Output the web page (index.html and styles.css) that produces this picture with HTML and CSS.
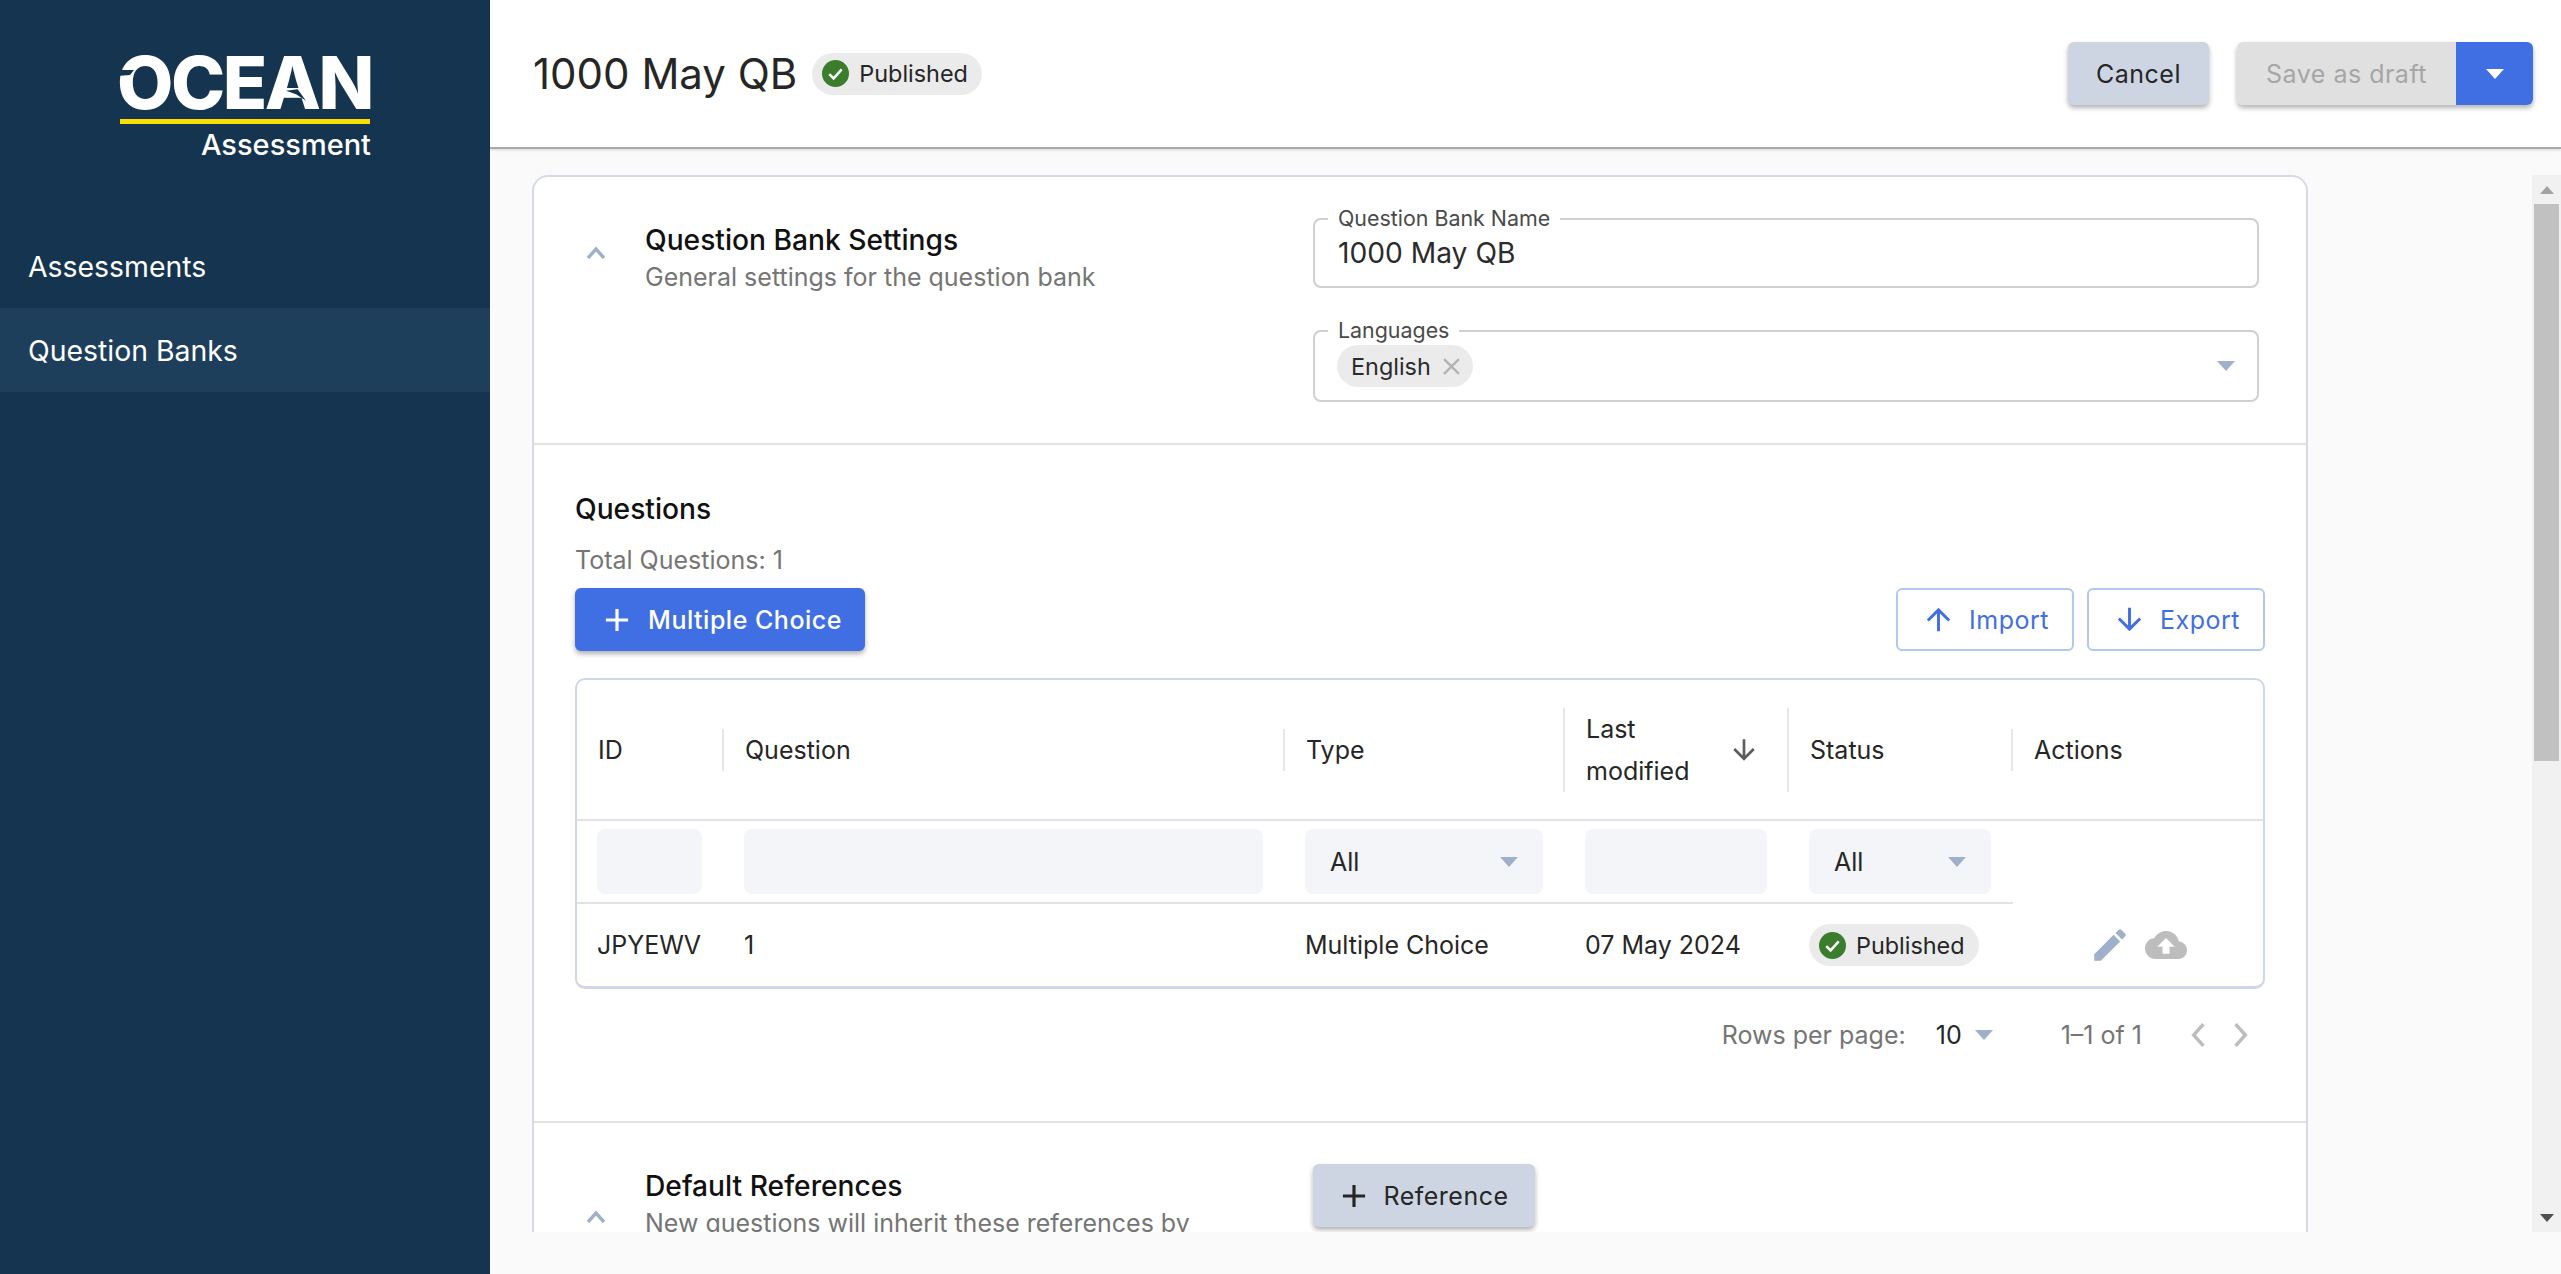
FILE: index.html
```
<!DOCTYPE html>
<html lang="en">
  <head>
    <meta charset="UTF-8" />
    <meta name="viewport" content="width=device-width, initial-scale=1.0" />
    <title>1000 May QB</title>
    <link rel="stylesheet" href="styles.css">
  </head>
  <body>
    <nav class="sidebar">
      <div class="logo">
        <div class="logo-name">
          OCEAN
          <svg class="logo-notch-o" viewBox="0 0 17 6"><path d="M0 0 L17 0 L13 5 L0 6 Z" /></svg>
          <svg class="logo-notch-a" viewBox="0 0 24 14"><path d="M0 2 L14 0 L24 14 L12 6 Z" /></svg>
        </div>
        <div class="logo-bar"></div>
        <div class="logo-sub">Assessment</div>
      </div>
      <ul class="menu">
        <li>Assessments</li>
        <li class="active">Question Banks</li>
      </ul>
    </nav>

    <main class="main">
      <header class="topbar">
        <div class="topbar-title">
          <h1>1000 May QB</h1>
          <span class="badge">
            <svg viewBox="0 0 26 26"><circle cx="13" cy="13" r="13" fill="#3a7d2c" /><path d="M7 13.5l4.2 4.2L19 9" fill="none" stroke="#fff" stroke-width="2.4" /></svg>
            Published
          </span>
        </div>
        <div class="topbar-actions">
          <button class="btn btn-soft">Cancel</button>
          <div class="split">
            <button class="btn split-main">Save as draft</button>
            <button class="btn split-drop"><span class="caret caret-white"></span></button>
          </div>
        </div>
      </header>

      <div class="body">
        <div class="viewport">
          <div class="card">
            <section class="section settings">
              <div class="section-head">
                <svg class="chevron" viewBox="0 0 20 13"><path d="M2 12l8-9 8 9" fill="none" stroke="#9fb0ca" stroke-width="3.4" /></svg>
                <div>
                  <h2>Question Bank Settings</h2>
                  <p>General settings for the question bank</p>
                </div>
              </div>
              <div class="fields">
                <div class="field">
                  <label>Question Bank Name</label>
                  <span class="field-value">1000 May QB</span>
                </div>
                <div class="field field-lang">
                  <label>Languages</label>
                  <span class="chip">English
                    <svg viewBox="0 0 16 16"><path d="M1 1l14 14M15 1L1 15" stroke="#b3b3b3" stroke-width="2.2" /></svg>
                  </span>
                  <span class="caret"></span>
                </div>
              </div>
            </section>

            <section class="section-questions">
              <h2>Questions</h2>
              <p class="total">Total Questions: 1</p>
              <div class="toolbar">
                <button class="btn btn-primary">
                  <svg viewBox="0 0 24 24"><path d="M19 13h-6v6h-2v-6H5v-2h6V5h2v6h6v2z" /></svg>
                  Multiple Choice
                </button>
                <div class="toolbar-right">
                  <button class="btn btn-outline">
                    <svg viewBox="0 0 24 24"><path d="M4 12l1.41 1.41L11 7.83V20h2V7.83l5.58 5.59L20 12l-8-8-8 8z" /></svg>
                    Import
                  </button>
                  <button class="btn btn-outline">
                    <svg viewBox="0 0 24 24"><path d="M20 12l-1.41-1.41L13 16.17V4h-2v12.17l-5.58-5.59L4 12l8 8 8-8z" /></svg>
                    Export
                  </button>
                </div>
              </div>

              <div class="table-wrap">
                <table class="grid">
                  <colgroup>
                    <col class="col-id" />
                    <col class="col-question" />
                    <col class="col-type" />
                    <col class="col-date" />
                    <col class="col-status" />
                    <col />
                  </colgroup>
                  <thead>
                    <tr class="head-row">
                      <th><div class="th-inner">ID</div></th>
                      <th><div class="th-inner">Question</div></th>
                      <th><div class="th-inner th-tall">Type</div></th>
                      <th>
                        <div class="th-inner th-sort">
                          <span>Last modified</span>
                          <svg viewBox="0 0 24 24"><path d="M20 12l-1.41-1.41L13 16.17V4h-2v12.17l-5.58-5.59L4 12l8 8 8-8z" /></svg>
                        </div>
                      </th>
                      <th><div class="th-inner">Status</div></th>
                      <th><div class="th-inner th-last">Actions</div></th>
                    </tr>
                    <tr class="filter-row">
                      <td><div class="filter"></div></td>
                      <td><div class="filter"></div></td>
                      <td><div class="filter">All<span class="caret"></span></div></td>
                      <td><div class="filter"></div></td>
                      <td><div class="filter">All<span class="caret"></span></div></td>
                      <td class="filter-empty"></td>
                    </tr>
                  </thead>
                  <tbody>
                    <tr class="data-row">
                      <td>JPYEWV</td>
                      <td>1</td>
                      <td>Multiple Choice</td>
                      <td>07 May 2024</td>
                      <td>
                        <span class="badge">
                          <svg viewBox="0 0 26 26"><circle cx="13" cy="13" r="13" fill="#3a7d2c" /><path d="M7 13.5l4.2 4.2L19 9" fill="none" stroke="#fff" stroke-width="2.4" /></svg>
                          Published
                        </span>
                      </td>
                      <td>
                        <div class="row-actions">
                          <svg class="icon-edit" viewBox="0 0 24 24"><path d="M3 17.25V21h3.75L17.81 9.94l-3.75-3.75L3 17.25zM20.71 7.04c.39-.39.39-1.02 0-1.41l-2.34-2.34c-.39-.39-1.02-.39-1.41 0l-1.83 1.83 3.75 3.75 1.83-1.83z" /></svg>
                          <svg class="icon-cloud" viewBox="0 0 24 24"><path d="M19.35 10.04C18.67 6.59 15.64 4 12 4 9.11 4 6.6 5.64 5.35 8.04 2.34 8.36 0 10.91 0 14c0 3.31 2.69 6 6 6h13c2.76 0 5-2.24 5-5 0-2.64-2.05-4.78-4.65-4.96zM14 13v4h-4v-4H7l5-5 5 5h-3z" /></svg>
                        </div>
                      </td>
                    </tr>
                  </tbody>
                </table>
              </div>

              <div class="pagination">
                <span class="rows-label">Rows per page:</span>
                <span class="rows-value">10<span class="caret"></span></span>
                <span class="range">1–1 of 1</span>
                <svg class="page-arrow" viewBox="0 0 14 24"><path d="M12 2L3 12l9 10" fill="none" stroke="#bdbdbd" stroke-width="3.2" /></svg>
                <svg class="page-arrow" viewBox="0 0 14 24"><path d="M2 2l9 10-9 10" fill="none" stroke="#bdbdbd" stroke-width="3.2" /></svg>
              </div>
            </section>

            <section class="section references">
              <div class="section-head">
                <svg class="chevron" viewBox="0 0 20 13"><path d="M2 12l8-9 8 9" fill="none" stroke="#9fb0ca" stroke-width="3.4" /></svg>
                <div>
                  <h2>Default References</h2>
                  <p>New questions will inherit these references by default</p>
                </div>
              </div>
              <div class="fields">
                <button class="btn btn-soft btn-ref">
                  <svg viewBox="0 0 24 24"><path d="M19 13h-6v6h-2v-6H5v-2h6V5h2v6h6v2z" /></svg>
                  Reference
                </button>
              </div>
            </section>
          </div>
        </div>

        <div class="scrollbar">
          <div class="scroll-btn"><span class="scroll-up"></span></div>
          <div class="scroll-track"><div class="scroll-thumb"></div></div>
          <div class="scroll-btn"><span class="scroll-down"></span></div>
        </div>
      </div>
    </main>
  </body>
</html>
```

FILE: styles.css
```
* {
  margin: 0;
  padding: 0;
  box-sizing: border-box;
}
html,
body {
  height: 100%;
  overflow: hidden;
}
body {
  display: flex;
  background-color: #fafafa;
  color: #262626;
  font-family: Inter, "Liberation Sans", sans-serif;
  font-size: 25px;
}
button {
  font-family: inherit;
  border: none;
}

/* sidebar */
.sidebar {
  width: 490px;
  flex-shrink: 0;
  background-color: #14344f;
  color: #ffffff;
}
.logo {
  width: 250px;
  margin: 55px 0 0 120px;
  height: 169px;
}
.logo-name {
  position: relative;
  margin-left: -3px;
  font-size: 73px;
  line-height: 56px;
  height: 56px;
  font-weight: 800;
  letter-spacing: -2.5px;
  white-space: nowrap;
}
.logo-notch-o {
  position: absolute;
  left: 0;
  top: 15px;
  width: 17px;
  height: 6px;
  fill: #14344f;
}
.logo-notch-a {
  position: absolute;
  left: 169px;
  top: 34px;
  width: 20px;
  height: 12px;
  fill: #14344f;
}
.logo-bar {
  height: 5px;
  margin-top: 8px;
  background-color: #f7e000;
}
.logo-sub {
  margin-top: 5px;
  margin-right: -1px;
  text-align: right;
  font-size: 29px;
  line-height: 32px;
  font-weight: 500;
}
.menu {
  list-style: none;
}
.menu li {
  height: 84px;
  padding-left: 28px;
  display: flex;
  align-items: center;
  font-size: 28.4px;
}
.menu .active {
  background-color: #1e3f5b;
}

/* top bar */
.main {
  flex: 1;
  min-width: 0;
  display: flex;
  flex-direction: column;
}
.topbar {
  height: 149px;
  flex-shrink: 0;
  background-color: #ffffff;
  border-bottom: 2px solid #a9a9a9;
  box-shadow: 0 1px 3px rgba(0, 0, 0, 0.15);
  padding: 42px 28px 0 43px;
  display: flex;
  justify-content: space-between;
  align-items: flex-start;
}
.topbar-title {
  height: 63px;
  display: flex;
  align-items: center;
  gap: 15px;
}
h1 {
  font-size: 42px;
  font-weight: 400;
}
.topbar-actions {
  display: flex;
  gap: 28px;
}
.badge {
  display: inline-flex;
  align-items: center;
  gap: 10px;
  height: 42px;
  padding: 0 14px 0 10px;
  border-radius: 21px;
  background-color: #ebebeb;
  font-size: 23.4px;
}
.badge svg {
  width: 27px;
  height: 27px;
}

/* buttons */
.btn {
  height: 63px;
  border-radius: 6px;
  font-size: 25px;
  font-weight: 500;
  letter-spacing: 0.5px;
  display: inline-flex;
  align-items: center;
  justify-content: center;
}
.btn svg {
  width: 38px;
  height: 38px;
  fill: currentColor;
}
.btn-soft {
  width: 141px;
  background-color: #cdd5e2;
  color: #262626;
  font-weight: 400;
  box-shadow: 0 3px 5px rgba(0, 0, 0, 0.3);
}
.btn-ref {
  width: 222px;
  gap: 10px;
  padding-right: 4px;
}
.split {
  display: flex;
  border-radius: 6px;
  box-shadow: 0 3px 5px rgba(0, 0, 0, 0.3);
}
.split-main {
  width: 219px;
  background-color: #e0e0e0;
  color: #a6a6a6;
  font-weight: 400;
  border-radius: 6px 0 0 6px;
}
.split-drop {
  width: 77px;
  background-color: #3f6fe3;
  border-radius: 0 6px 6px 0;
}
.btn-primary {
  width: 290px;
  gap: 12px;
  background-color: #3f6fe3;
  color: #ffffff;
  box-shadow: 0 3px 5px rgba(0, 0, 0, 0.3);
}
.btn-outline {
  width: 178px;
  gap: 13px;
  background-color: #ffffff;
  color: #3f6fe3;
  font-weight: 400;
  border: 2px solid #b4c7f4;
}
.btn-outline svg {
  width: 35px;
  height: 35px;
}
.caret {
  display: inline-block;
  width: 0;
  height: 0;
  border-left: 9px solid transparent;
  border-right: 9px solid transparent;
  border-top: 10px solid #9fb0ca;
}
.caret-white {
  border-top-color: #ffffff;
}

/* scroll area */
.body {
  height: 1057px;
  margin-top: 26px;
  padding-left: 42px;
  display: flex;
  justify-content: space-between;
}
.viewport {
  width: 1776px;
  overflow: hidden;
}
.card {
  background-color: #ffffff;
  border: 2px solid #d5dae6;
  border-radius: 16px;
}
.section {
  display: grid;
  grid-template-columns: 737px 1fr;
  padding: 41px 47px 41px 42px;
}
.settings {
  border-bottom: 2px solid #e2e2e6;
}
.section-head {
  display: flex;
  align-items: center;
  align-self: start;
  margin-top: 3px;
}
.chevron {
  width: 20px;
  height: 13px;
  margin: 0 39px 12px 10px;
  flex-shrink: 0;
}
h2 {
  font-size: 28.2px;
  line-height: 38px;
  font-weight: 500;
  color: #111111;
}
.section-head p {
  font-size: 25px;
  line-height: 36px;
  color: #757575;
  width: 600px;
}
.fields {
  display: flex;
  flex-direction: column;
  gap: 42px;
  align-items: flex-start;
}
.field {
  position: relative;
  width: 946px;
  height: 70px;
  padding-left: 23px;
  border: 2px solid #d0d0d0;
  border-radius: 8px;
  display: flex;
  align-items: center;
}
.field label {
  position: absolute;
  left: 13px;
  top: -14px;
  padding: 0 10px;
  background-color: #ffffff;
  font-size: 21.4px;
  line-height: 24px;
  color: #4a4a4a;
}
.field-value {
  font-size: 28.2px;
  color: #2b2b2b;
}
.field-lang {
  height: 72px;
  justify-content: space-between;
  padding-right: 22px;
  padding-left: 22px;
}
.chip {
  display: inline-flex;
  align-items: center;
  gap: 12px;
  height: 42px;
  width: 136px;
  padding-left: 14px;
  border-radius: 21px;
  background-color: #ebebeb;
  font-size: 23.4px;
  color: #2b2b2b;
}
.chip svg {
  width: 17px;
  height: 17px;
}

/* questions */
.section-questions {
  padding: 45px 41px 40px 41px;
  border-bottom: 2px solid #e2e2e6;
}
.total {
  margin-top: 14px;
  line-height: 36px;
  color: #757575;
}
.toolbar {
  margin-top: 10px;
  display: flex;
  justify-content: space-between;
}
.toolbar-right {
  display: flex;
  gap: 13px;
}
.table-wrap {
  margin-top: 27px;
  border: 2px solid #cfd7e6;
  border-bottom-width: 3px;
  border-radius: 10px;
  overflow: hidden;
}
.grid {
  width: 100%;
  table-layout: fixed;
  border-collapse: collapse;
}
.col-id {
  width: 147px;
}
.col-question {
  width: 561px;
}
.col-type {
  width: 280px;
}
.col-date,
.col-status {
  width: 224px;
}
.head-row {
  height: 140px;
  border-bottom: 2px solid #e2e2e6;
}
.head-row th {
  font-weight: 400;
  text-align: left;
}
.th-inner {
  height: 42px;
  line-height: 42px;
  padding: 0 21px;
  border-right: 2px solid #e6e6e6;
  display: flex;
  align-items: center;
  justify-content: space-between;
}
.th-tall {
  height: 84px;
}
.th-sort {
  height: 84px;
  padding-right: 27px;
}
.th-sort span {
  width: 140px;
}
.th-sort svg {
  width: 32px;
  height: 32px;
  fill: #5c5c5c;
}
.th-last {
  border-right: none;
}
.filter-row {
  height: 83px;
}
.filter-row td {
  padding: 0 22px 0 20px;
  border-bottom: 2px solid #e2e2e6;
}
.filter-row .filter-empty {
  border-bottom: none;
}
.filter {
  height: 65px;
  padding: 0 25px;
  border-radius: 8px;
  background-color: #f4f5f9;
  display: flex;
  align-items: center;
  justify-content: space-between;
}
.data-row {
  height: 83px;
}
.data-row td {
  padding: 0 22px 0 20px;
}
.row-actions {
  display: flex;
  justify-content: center;
  gap: 14px;
  margin-left: 2px;
}
.row-actions svg {
  width: 42px;
  height: 42px;
}
.icon-edit {
  fill: #9fb0ca;
}
.icon-cloud {
  fill: #bdbdbd;
}
.pagination {
  height: 92px;
  display: flex;
  align-items: center;
  justify-content: flex-end;
  color: #757575;
}
.rows-value {
  margin-left: 30px;
  display: flex;
  align-items: center;
  gap: 13px;
  color: #262626;
}
.range {
  margin-left: 68px;
  margin-right: 48px;
}
.page-arrow {
  width: 16px;
  height: 26px;
  margin-right: 27px;
}
.page-arrow:last-child {
  margin-right: 16px;
}

/* fake scrollbar */
.scrollbar {
  width: 29px;
  display: flex;
  flex-direction: column;
  background-color: #f1f1f1;
}
.scroll-btn {
  height: 29px;
  display: flex;
  align-items: center;
  justify-content: center;
}
.scroll-track {
  flex: 1;
  padding: 0 2px;
}
.scroll-thumb {
  height: 557px;
  background-color: #c1c1c1;
}
.scroll-up,
.scroll-down {
  width: 0;
  height: 0;
  border-left: 7px solid transparent;
  border-right: 7px solid transparent;
}
.scroll-up {
  border-bottom: 8px solid #a3a3a3;
}
.scroll-down {
  border-top: 8px solid #505050;
}
```
